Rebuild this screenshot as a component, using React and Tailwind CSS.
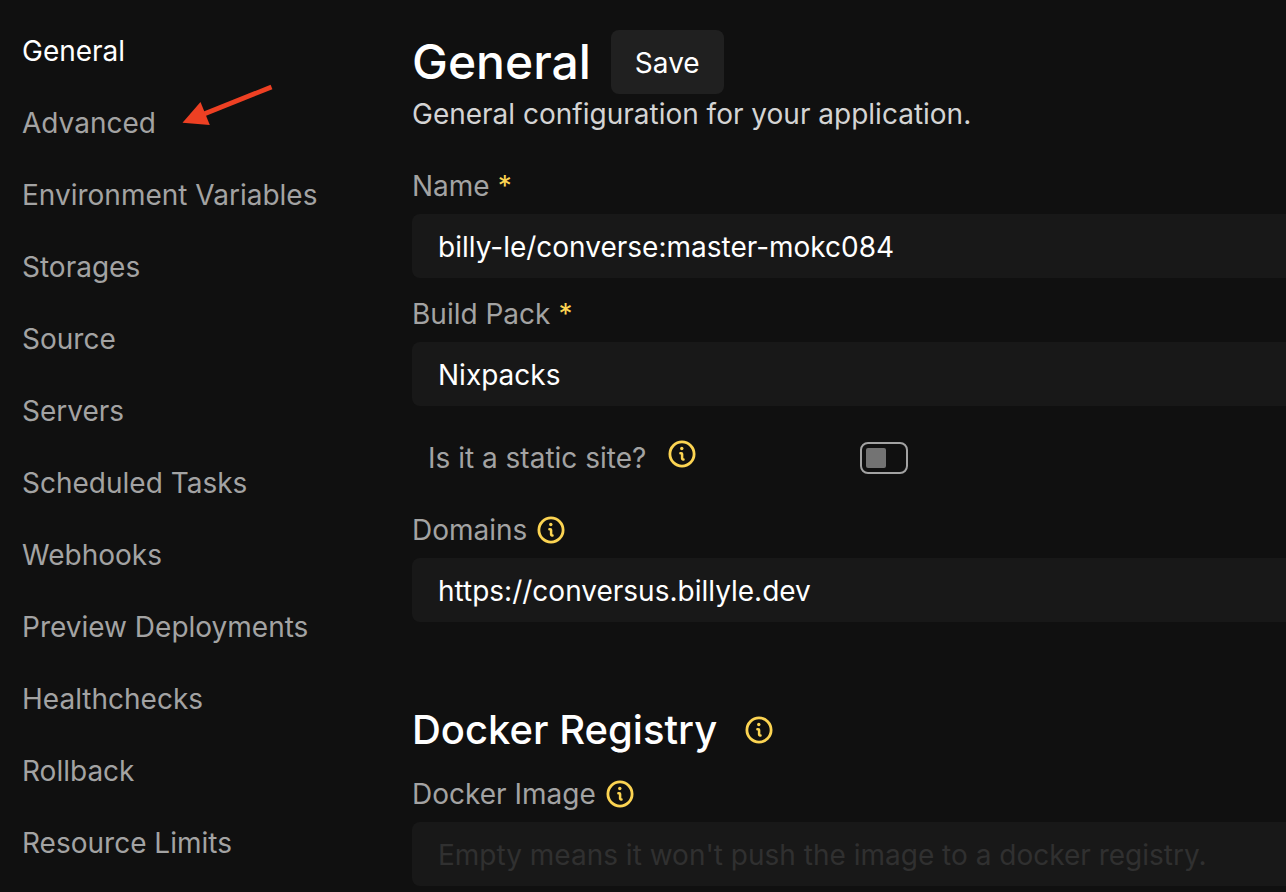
import React from "react";

const NAV = [
  "General",
  "Advanced",
  "Environment Variables",
  "Storages",
  "Source",
  "Servers",
  "Scheduled Tasks",
  "Webhooks",
  "Preview Deployments",
  "Healthchecks",
  "Rollback",
  "Resource Limits",
];

const FIELD =
  "block h-16 w-full appearance-none rounded-l-lg bg-[#181818] px-[26px] pt-0.5 text-white outline-none placeholder:text-[#303030]";

function Info() {
  return (
    <svg
      aria-hidden="true"
      viewBox="0 0 32 32"
      fill="none"
      stroke="currentColor"
      strokeLinecap="round"
      strokeLinejoin="round"
      className="size-8 shrink-0 text-[#fcd452]"
    >
      <circle cx="16" cy="16" r="12.1" strokeWidth="2.8" />
      <path d="M14.4 15.2h.8a.9.9 0 0 1 .9.9v4.4a.9.9 0 0 0 .9.9h.5" strokeWidth="2.5" />
      <circle cx="15.8" cy="10.5" r="1.7" fill="currentColor" stroke="none" />
    </svg>
  );
}

function Label({ htmlFor, children }) {
  return (
    <label htmlFor={htmlFor} className="mb-2 flex h-10 items-center gap-2 text-[#a3a3a3]">
      {children}
    </label>
  );
}

function Required() {
  return <span className="text-[#fcd452]">*</span>;
}

function PointerArrow() {
  return (
    <svg
      aria-hidden="true"
      viewBox="0 0 92 42"
      className="pointer-events-none absolute -top-5 left-40 h-[42px] w-[92px]"
    >
      <path d="M89.5 4 L22 31" stroke="#ee4023" strokeWidth="4.8" fill="none" />
      <path d="M0.5 39.7 L18.5 19 L27.8 42 Z" fill="#ee4023" />
    </svg>
  );
}

export default function App() {
  return (
    <div className="flex min-h-screen overflow-x-hidden bg-[#101010] font-['Inter',sans-serif] text-[28px] leading-10 text-white antialiased [font-optical-sizing:none]">
      <nav className="w-[412px] shrink-0 pt-[31px] pl-[22px]">
        <ul className="flex flex-col gap-8">
          {NAV.map((item, i) => (
            <li key={item} className="relative">
              <a href="#" className={i === 0 ? "text-white" : "text-[#a3a3a3]"}>
                {item}
              </a>
              {item === "Advanced" && <PointerArrow />}
            </li>
          ))}
        </ul>
      </nav>

      <main className="min-w-0 grow pt-[30px]">
        <form onSubmit={(e) => e.preventDefault()}>
          <div className="flex h-16 items-center gap-5">
            <h1 className="text-5xl font-medium">General</h1>
            <button type="submit" className="h-16 rounded-lg bg-[#202020] px-6 pt-0.5">
              Save
            </button>
          </div>
          <p className="text-[#d4d4d4]">General configuration for your application.</p>

          <div className="mt-8">
            <Label htmlFor="name">
              Name <Required />
            </Label>
            <input id="name" className={FIELD} defaultValue="billy-le/converse:master-mokc084" />
          </div>

          <div className="mt-4">
            <Label htmlFor="build-pack">
              Build Pack <Required />
            </Label>
            <select id="build-pack" className={FIELD}>
              <option>Nixpacks</option>
            </select>
          </div>

          <div className="mt-8 flex h-10 w-[496px] items-center justify-between pl-4">
            <label htmlFor="static" className="flex gap-5 text-[#a3a3a3]">
              Is it a static site?
              <Info />
            </label>
            <input
              id="static"
              type="checkbox"
              className="flex h-8 w-12 appearance-none items-center rounded-lg border-2 border-[#a3a3a3] pl-1 before:size-5 before:rounded-xs before:bg-[#737373] checked:justify-end checked:pr-1"
            />
          </div>

          <div className="mt-8">
            <Label htmlFor="domains">
              Domains <Info />
            </Label>
            <input id="domains" className={FIELD} defaultValue="https://conversus.billyle.dev" />
          </div>

          <div className="mt-20 flex h-14 items-center gap-[26px]">
            <h2 className="text-[40px] font-medium">Docker Registry</h2>
            <Info />
          </div>
          <div className="mt-4">
            <Label htmlFor="image">
              Docker Image <Info />
            </Label>
            <input
              id="image"
              className={FIELD}
              placeholder="Empty means it won't push the image to a docker registry."
            />
          </div>
        </form>
      </main>
    </div>
  );
}
